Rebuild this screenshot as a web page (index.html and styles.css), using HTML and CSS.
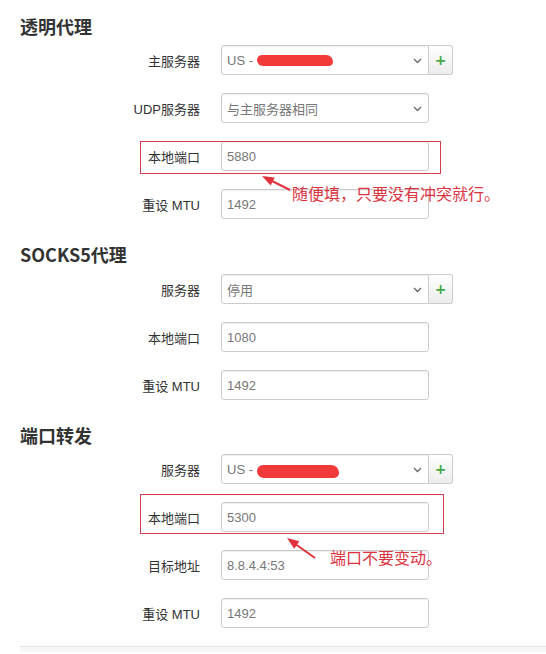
FILE: index.html
```html
<!DOCTYPE html>
<html lang="zh-CN">
<head>
  <meta charset="UTF-8">
  <meta name="viewport" content="width=device-width, initial-scale=1">
  <title>代理设置</title>
  <link rel="stylesheet" href="styles.css">
</head>
<body>
  <!-- 透明代理 -->
  <div class="section">
    <h3>透明代理</h3>
    <div class="row">
      <label>主服务器</label>
      <div class="select has-btn">US -&nbsp;<span class="redact"></span><svg class="chev" width="9" height="6" viewBox="0 0 9 6"><path d="M1 1l3.5 3.5L8 1" fill="none" stroke="#666" stroke-width="1.3"/></svg></div>
      <button class="add-btn">+</button>
    </div>
    <div class="row">
      <label>UDP服务器</label>
      <div class="select">与主服务器相同<svg class="chev" width="9" height="6" viewBox="0 0 9 6"><path d="M1 1l3.5 3.5L8 1" fill="none" stroke="#666" stroke-width="1.3"/></svg></div>
    </div>
    <div class="row">
      <label>本地端口</label>
      <input type="text" value="5880">
      <div class="note note-a">
        <div class="note-box"></div>
        <svg class="note-arrow" width="60" height="30" viewBox="0 0 60 30">
          <line x1="32" y1="9" x2="50" y2="18" stroke="#e0323c" stroke-width="2"/>
          <polygon points="22,4 34.7,5.4 30.7,13.4" fill="#e0323c"/>
        </svg>
        <span class="note-text">随便填，只要没有冲突就行。</span>
      </div>
    </div>
    <div class="row">
      <label>重设 MTU</label>
      <input type="text" value="1492">
    </div>
  </div>

  <!-- SOCKS5代理 -->
  <div class="section">
    <h3>SOCKS5代理</h3>
    <div class="row">
      <label>服务器</label>
      <div class="select has-btn">停用<svg class="chev" width="9" height="6" viewBox="0 0 9 6"><path d="M1 1l3.5 3.5L8 1" fill="none" stroke="#666" stroke-width="1.3"/></svg></div>
      <button class="add-btn">+</button>
    </div>
    <div class="row">
      <label>本地端口</label>
      <input type="text" value="1080">
    </div>
    <div class="row">
      <label>重设 MTU</label>
      <input type="text" value="1492">
    </div>
  </div>

  <!-- 端口转发 -->
  <div class="section section-last">
    <h3>端口转发</h3>
    <div class="row">
      <label>服务器</label>
      <div class="select has-btn">US -&nbsp;<span class="redact redact-b"></span><svg class="chev" width="9" height="6" viewBox="0 0 9 6"><path d="M1 1l3.5 3.5L8 1" fill="none" stroke="#666" stroke-width="1.3"/></svg></div>
      <button class="add-btn">+</button>
    </div>
    <div class="row">
      <label>本地端口</label>
      <input type="text" value="5300">
      <div class="note note-b">
        <div class="note-box"></div>
        <svg class="note-arrow" width="50" height="35" viewBox="0 0 50 35">
          <line x1="16" y1="12.5" x2="35" y2="26" stroke="#e0323c" stroke-width="2"/>
          <polygon points="7,6 19.4,9.3 14.2,16.7" fill="#e0323c"/>
        </svg>
        <span class="note-text">端口不要变动。</span>
      </div>
    </div>
    <div class="row">
      <label>目标地址</label>
      <input type="text" value="8.8.4.4:53">
    </div>
    <div class="row">
      <label>重设 MTU</label>
      <input type="text" value="1492">
    </div>
  </div>

  <div class="footer-bar"></div>
</body>
</html>
```

FILE: styles.css
```css
/* General */
* {
  margin: 0;
  padding: 0;
  box-sizing: border-box;
}

body {
  background: #fff;
  color: #333;
  font-family: "Liberation Sans", "Noto Sans CJK SC", sans-serif;
  font-size: 13px;
  padding-top: 13px;
  overflow: hidden;
}

/* Sections */
.section {
  padding: 0 0 4px 20px;
}

.section h3 {
  font-family: "Noto Sans CJK SC", sans-serif;
  font-size: 18px;
  font-weight: 700;
  line-height: 26px;
  color: #333;
  margin-bottom: 7px;
}

.section:first-child h3,
.section-last h3 {
  margin-bottom: 6px;
}

/* Form rows */
.row {
  position: relative;
  display: flex;
  align-items: center;
  height: 30px;
  margin-bottom: 18px;
}

.row label {
  flex: 0 0 180px;
  text-align: right;
  margin-right: 21px;
  font-family: "Liberation Sans", "Noto Sans CJK SC", sans-serif;
  font-size: 13px;
  color: #333;
}

.row input,
.select {
  width: 208px;
  height: 30px;
  padding: 0 5px;
  border: 1px solid #ccc;
  border-radius: 3px;
  box-shadow: inset 0 1px 1px rgba(0, 0, 0, 0.075);
  font-family: "Liberation Sans", "Noto Sans CJK SC", sans-serif;
  font-size: 13px;
  color: #777;
  background: #fff;
}

.select {
  display: flex;
  align-items: center;
  position: relative;
}

.select .chev {
  position: absolute;
  right: 6px;
  top: 12px;
}

.select.has-btn {
  border-radius: 3px 0 0 3px;
}

.add-btn {
  width: 24px;
  height: 30px;
  border: 1px solid #ccc;
  border-left: none;
  border-radius: 0 3px 3px 0;
  background: linear-gradient(#fff, #ececec);
  color: #45a845;
  font-family: "DejaVu Sans", sans-serif;
  font-size: 14px;
  font-weight: 700;
  line-height: 28px;
  text-align: center;
}

/* Redacted server name */
.redact {
  display: inline-block;
  width: 76px;
  height: 11px;
  background: #f23a3a;
  border-radius: 6px 8px 5px 7px;
  margin-top: 1px;
}

.redact-b {
  width: 82px;
  height: 13px;
  margin-top: 4px;
}

/* Annotations */
.note {
  position: absolute;
  left: 0;
  top: 0;
  z-index: 2;
  pointer-events: none;
}

.note-box {
  position: absolute;
  border: 1px solid #d2404f;
}

.note-arrow {
  position: absolute;
}

.note-text {
  position: absolute;
  white-space: nowrap;
  font-family: "Noto Sans CJK SC", sans-serif;
  font-size: 16px;
  line-height: 20px;
  color: #d9343f;
}

.note-a .note-box { left: 120px; top: 0; width: 301px; height: 33px; }
.note-a .note-arrow { left: 220px; top: 31px; }
.note-a .note-text { left: 272px; top: 42px; }

.note-b .note-box { left: 120px; top: -8px; width: 304px; height: 40px; }
.note-b .note-arrow { left: 260px; top: 30px; }
.note-b .note-text { left: 310px; top: 45px; }

/* Bottom bar */
.footer-bar {
  margin-left: 20px;
  margin-top: -4px;
  height: 6px;
  background: #f6f6f6;
  border-top: 1px solid #e3e3e3;
}
```
